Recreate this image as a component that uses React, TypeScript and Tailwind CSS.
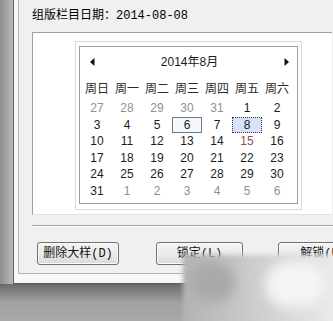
import React from "react";

type Day = { d: number; muted?: boolean };

const weekdays = ["周日", "周一", "周二", "周三", "周四", "周五", "周六"];

const weeks: Day[][] = [
  [{ d: 27, muted: true }, { d: 28, muted: true }, { d: 29, muted: true }, { d: 30, muted: true }, { d: 31, muted: true }, { d: 1 }, { d: 2 }],
  [{ d: 3 }, { d: 4 }, { d: 5 }, { d: 6 }, { d: 7 }, { d: 8 }, { d: 9 }],
  [{ d: 10 }, { d: 11 }, { d: 12 }, { d: 13 }, { d: 14 }, { d: 15 }, { d: 16 }],
  [{ d: 17 }, { d: 18 }, { d: 19 }, { d: 20 }, { d: 21 }, { d: 22 }, { d: 23 }],
  [{ d: 24 }, { d: 25 }, { d: 26 }, { d: 27 }, { d: 28 }, { d: 29 }, { d: 30 }],
  [{ d: 31 }, { d: 1, muted: true }, { d: 2, muted: true }, { d: 3, muted: true }, { d: 4, muted: true }, { d: 5, muted: true }, { d: 6, muted: true }],
];

const calFont = { fontFamily: '"Liberation Sans", "Noto Sans CJK SC", sans-serif' };
const dlgFont = { fontFamily: '"Liberation Mono", "Noto Sans CJK SC", monospace' };

function DayCell({ day }: { day: Day }) {
  const today = !day.muted && day.d === 6;
  const selected = !day.muted && day.d === 8;
  let cls = "flex h-[16.5px] w-[30px] items-center justify-center text-[12px] leading-none";
  if (day.muted) cls += " text-[#8f8f8f]";
  else if (day.d === 15) cls += " text-[#8a5440]";
  else cls += " text-[#1c1c1c]";
  if (today) cls += " border border-[#6f7a86] bg-[#f5f8fc]";
  if (selected) cls += " border border-dotted border-[#3a3a3a] bg-[#d8e2f8]";
  return <div className={cls}>{day.d}</div>;
}

function Calendar() {
  return (
    <div className="border border-[#dadada] bg-white px-[3px] pt-[4px] pb-[5px]">
      <div className="h-[158px] w-[219px] border border-[#9e9e9e] bg-white pl-[2px]" style={calFont}>
        <div className="flex h-[30px] items-center justify-between pl-[8px] pr-[8px]">
          <svg width="5" height="8" viewBox="0 0 5 8">
            <path d="M4.5 0 L0 4 L4.5 8 Z" fill="#111" />
          </svg>
          <span className="text-[12px] text-[#1c1c1c]">2014年8月</span>
          <svg width="5" height="8" viewBox="0 0 5 8">
            <path d="M0.5 0 L5 4 L0.5 8 Z" fill="#111" />
          </svg>
        </div>
        <div className="flex h-[23px] items-center">
          {weekdays.map((w) => (
            <div key={w} className="w-[30px] text-center text-[12px] text-[#2a2a2a]">
              {w}
            </div>
          ))}
        </div>
        {weeks.map((wk, i) => (
          <div key={i} className="flex">
            {wk.map((day, j) => (
              <DayCell key={j} day={day} />
            ))}
          </div>
        ))}
      </div>
    </div>
  );
}

function Button({ label, w }: { label: string; w: string }) {
  return (
    <div
      className={`flex h-[23px] shrink-0 items-center justify-center rounded-[3px] border border-[#707070] bg-gradient-to-b from-[#f3f3f3] via-[#ebebeb] to-[#dadada] text-[12px] text-[#111] shadow-[inset_0_0_0_1px_#fbfbfb] ${w}`}
      style={dlgFont}
    >
      {label}
    </div>
  );
}

export default function App() {
  return (
    <div className="relative h-[321px] w-[333px] overflow-hidden bg-[#a7a7a7]">
      <div className="flex h-[284px]">
        <div className="w-[13px] shrink-0 bg-gradient-to-r from-[#8e8e8e] to-[#b9b9b9]" />
        <div className="w-[330px] shrink-0 border-b border-l border-[#5c5c5c] bg-[#f8f8f8] pb-[9px] pl-[4px]">
          <div className="h-[274px] border-b border-l border-[#b3b3b3] bg-[#f0f0f0]">
            <div className="pl-[13px] pt-[8px] text-[12px] leading-[16px] text-black" style={dlgFont}>
              组版栏目日期：2014-08-08
            </div>
            <div className="ml-[13px] mt-[8px] h-[183px] w-[300px] border-b border-l border-t border-b-[#e2e2e2] border-l-[#a0a0a0] border-t-[#a0a0a0] bg-white pl-[42px] pt-[8px]">
              <div className="w-[227px]">
                <Calendar />
              </div>
            </div>
            <div className="ml-[13px] mt-[10px] h-[2px] border-b border-t border-b-white border-t-[#a3a3a3]" />
            <div className="mt-[15px] flex pl-[18px]">
              <Button label="删除大样(D)" w="w-[82px]" />
              <div className="w-[37px] shrink-0" />
              <Button label="锁定(L)" w="w-[87px]" />
              <div className="w-[35px] shrink-0" />
              <Button label="解锁(U)" w="w-[90px]" />
            </div>
          </div>
        </div>
      </div>
      <div className="h-[37px] bg-gradient-to-b from-[#6a6a6a] via-[#a2a2a2] to-[#a9a9a9]" />

      {/* blurred watermark patch */}
      <div className="pointer-events-none absolute left-[183px] top-[255px] h-[70px] w-[155px] bg-gradient-to-r from-[#b3b3b3] via-[#cfcfcf] to-[#ececec] blur-[2px]" />
      <div className="pointer-events-none absolute left-[190px] top-[262px] h-[40px] w-[45px] rounded-full bg-[#a9a9a9] blur-[6px]" />
      <div className="pointer-events-none absolute left-[265px] top-[262px] h-[45px] w-[60px] rounded-full bg-[#f4f4f4] blur-[6px]" />
    </div>
  );
}
